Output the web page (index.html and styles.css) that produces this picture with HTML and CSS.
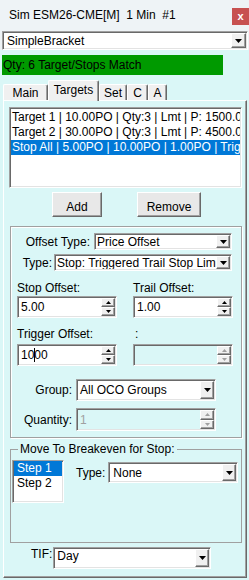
FILE: index.html
```html
<!DOCTYPE html>
<html>
<head>
<meta charset="utf-8">
<link rel="stylesheet" href="styles.css">
</head>
<body>
<div class="window">
  <div class="titlebar">
    <span class="title">Sim ESM26-CME[M]  1 Min  #1</span>
    <span class="close">x</span>
  </div>
  <div class="preset">
    <div class="combo combo-preset">
      <span class="val pad3">SimpleBracket</span>
      <span class="arrow"><svg width="7" height="4" viewBox="0 0 7 4"><path d="M0 0h7L3.5 4z"/></svg></span>
    </div>
  </div>
  <div class="main">
    <div class="status">Qty: 6 Target/Stops Match</div>
    <div class="tabs">
      <div class="tab w-main">Main</div>
      <div class="tab tab-active w-targets">Targets</div>
      <div class="tab w-set">Set</div>
      <div class="tab w-c">C</div>
      <div class="tab w-a">A</div>
    </div>
    <div class="page">
      <div class="listbox orders">
        <div class="item">Target 1 | 10.00PO | Qty:3 | Lmt | P: 1500.00</div>
        <div class="item">Target 2 | 30.00PO | Qty:3 | Lmt | P: 4500.00</div>
        <div class="item sel">Stop All | 5.00PO | 10.00PO | 1.00PO | TrigTrailStopLmt</div>
      </div>
      <div class="btnrow">
        <div class="btn btn-add">Add</div>
        <div class="btn btn-remove">Remove</div>
      </div>
      <div class="group1">
        <div class="row-r row-offset">
          <span class="lbl">Offset Type:</span>
          <div class="combo combo-offset">
            <span class="val pad1">Price Offset</span>
            <span class="arrow"><svg width="7" height="4" viewBox="0 0 7 4"><path d="M0 0h7L3.5 4z"/></svg></span>
          </div>
        </div>
        <div class="row-r row-type">
          <span class="lbl">Type:</span>
          <div class="combo combo-type">
            <span class="val pad1">Stop: Triggered Trail Stop Limit</span>
            <span class="arrow"><svg width="7" height="4" viewBox="0 0 7 4"><path d="M0 0h7L3.5 4z"/></svg></span>
          </div>
        </div>
        <div class="pair pair-1">
          <span class="lbl">Stop Offset:</span>
          <span class="lbl">Trail Offset:</span>
          <div class="spin">
            <span class="val">5.00</span>
            <span class="spinbtns"><span class="sb"><svg width="5" height="3" viewBox="0 0 5 3"><path d="M2.5 0L5 3H0z"/></svg></span><span class="sb"><svg width="5" height="3" viewBox="0 0 5 3"><path d="M0 0h5L2.5 3z"/></svg></span></span>
          </div>
          <div class="spin">
            <span class="val">1.00</span>
            <span class="spinbtns"><span class="sb"><svg width="5" height="3" viewBox="0 0 5 3"><path d="M2.5 0L5 3H0z"/></svg></span><span class="sb"><svg width="5" height="3" viewBox="0 0 5 3"><path d="M0 0h5L2.5 3z"/></svg></span></span>
          </div>
        </div>
        <div class="pair pair-2">
          <span class="lbl">Trigger Offset:</span>
          <span class="lbl colon">:</span>
          <div class="spin">
            <span class="val">10<span class="caret"></span>00</span>
            <span class="spinbtns"><span class="sb"><svg width="5" height="3" viewBox="0 0 5 3"><path d="M2.5 0L5 3H0z"/></svg></span><span class="sb"><svg width="5" height="3" viewBox="0 0 5 3"><path d="M0 0h5L2.5 3z"/></svg></span></span>
          </div>
          <div class="spin spin-disabled">
            <span class="val"></span>
            <span class="spinbtns"><span class="sb"><svg width="5" height="3" viewBox="0 0 5 3"><path d="M2.5 0L5 3H0z"/></svg></span><span class="sb"><svg width="5" height="3" viewBox="0 0 5 3"><path d="M0 0h5L2.5 3z"/></svg></span></span>
          </div>
        </div>
        <div class="lblgrid">
          <span class="lbl r">Group:</span>
          <div class="combo combo-group">
            <span class="val pad2">All OCO Groups</span>
            <span class="arrow"><svg width="7" height="4" viewBox="0 0 7 4"><path d="M0 0h7L3.5 4z"/></svg></span>
          </div>
          <span class="lbl r">Quantity:</span>
          <div class="spin spin-disabled spin-qty">
            <span class="val">1</span>
            <span class="spinbtns"><span class="sb"><svg width="5" height="3" viewBox="0 0 5 3"><path d="M2.5 0L5 3H0z"/></svg></span><span class="sb"><svg width="5" height="3" viewBox="0 0 5 3"><path d="M0 0h5L2.5 3z"/></svg></span></span>
          </div>
        </div>
      </div>
      <fieldset class="group2">
        <legend>Move To Breakeven for Stop:</legend>
        <div class="be">
          <div class="listbox steps">
            <div class="item sel">Step 1</div>
            <div class="item">Step 2</div>
          </div>
          <div class="be-type">
            <span class="lbl">Type:</span>
            <div class="combo combo-be">
              <span class="val pad3">None</span>
              <span class="arrow"><svg width="7" height="4" viewBox="0 0 7 4"><path d="M0 0h7L3.5 4z"/></svg></span>
            </div>
          </div>
        </div>
      </fieldset>
      <div class="tif">
        <span class="lbl">TIF:</span>
        <div class="combo combo-tif">
          <span class="val pad2 top">Day</span>
          <span class="arrow"><svg width="7" height="4" viewBox="0 0 7 4"><path d="M0 0h7L3.5 4z"/></svg></span>
        </div>
      </div>
    </div>
  </div>
</div>
</body>
</html>
```
FILE: styles.css
```css
* { box-sizing: border-box; }

body {
  margin: 0;
  font-family: "Liberation Sans", Arial, sans-serif;
  font-size: 12px;
  line-height: 14px;
  color: #000;
  background: #daf7f7;
  width: 249px;
  height: 580px;
  overflow: hidden;
}

.window {
  width: 249px;
  height: 580px;
  display: flex;
  flex-direction: column;
  background: #daf7f7;
}

.titlebar {
  height: 31px;
  background: #eef3f6;
  display: flex;
  align-items: flex-start;
}

.title {
  margin: 8px 0 0 9px;
  white-space: pre;
}

.close {
  margin: 8px 0 0 auto;
  width: 17px;
  height: 17px;
  background: #c75050;
  color: #fff;
  font-weight: bold;
  font-size: 11px;
  line-height: 16px;
  text-align: center;
}

.preset {
  background: #eef3f6;
  height: 19px;
  padding-left: 2px;
}

.combo {
  display: flex;
  background: #fff;
  border: 1px solid;
  border-color: #a0a0a0 #fff #fff #a0a0a0;
  box-shadow: inset 1px 1px 0 #696969, inset -1px -1px 0 #e3e3e3;
  padding: 1px;
}

.combo .val {
  flex: 1;
  min-width: 0;
  overflow: hidden;
  white-space: nowrap;
  display: flex;
  align-items: center;
}

.combo .val.top { align-items: flex-start; }

.pad1 { padding-left: 1px; }
.pad2 { padding-left: 2px; }
.pad3 { padding-left: 3px; }

.combo .arrow {
  width: 14px;
  flex: none;
  background: #f0f0f0;
  border: 1px solid;
  border-color: #fff #696969 #696969 #fff;
  box-shadow: inset -1px -1px 0 #a0a0a0;
  display: flex;
  align-items: center;
  justify-content: center;
}

.combo-preset { width: 246px; height: 19px; }
.combo-preset .arrow { width: 15px; }
.combo-offset { width: 138px; height: 17px; }
.combo-type { width: 178px; height: 17px; }
.combo-group { width: 140px; height: 22px; }
.combo-be { width: 130px; height: 21px; }
.combo-tif { width: 158px; height: 22px; }

.main {
  flex: 1;
  display: flex;
  flex-direction: column;
  padding-top: 5px;
}

.status {
  margin-left: 2px;
  width: 221px;
  height: 20px;
  background: #009a00;
  padding-left: 1px;
  line-height: 20px;
}

.tabs {
  height: 25px;
  display: flex;
  align-items: flex-end;
  padding-left: 3px;
}

.tab {
  height: 16px;
  padding-top: 1px;
  background: #f0f0f0;
  border: 1px solid;
  border-bottom: none;
  border-color: #fff #696969 #696969 #fff;
  box-shadow: inset -1px 0 0 #a0a0a0;
  border-radius: 2px 2px 0 0;
  text-align: center;
}

.tab-active {
  height: 21px;
  padding-top: 2px;
  margin-bottom: -1px;
  position: relative;
  z-index: 1;
}

.w-main { width: 45px; }
.w-targets { width: 51px; }
.w-set { width: 28px; }
.w-c { width: 21px; }
.w-a { width: 19px; }

.page {
  margin-left: 3px;
  width: 244px;
  height: 478px;
  border: 1px solid;
  border-color: #fff #696969 #696969 #fff;
  box-shadow: inset -1px -1px 0 #a0a0a0;
  background: #daf7f7;
  display: flex;
  flex-direction: column;
}

.listbox {
  background: #fff;
  border: 1px solid;
  border-color: #a0a0a0 #fff #fff #a0a0a0;
  box-shadow: inset 1px 1px 0 #696969, inset -1px -1px 0 #e3e3e3;
  overflow: hidden;
}

.listbox .item {
  height: 15px;
  line-height: 15px;
  white-space: nowrap;
  overflow: hidden;
}

.listbox .item.sel {
  background: #0078d7;
  color: #fff;
}

.orders {
  margin: 6px 0 0 5px;
  width: 233px;
  height: 81px;
  padding: 2px 1px 0;
}

.orders .item { padding-left: 1px; }

.btnrow {
  display: flex;
  gap: 35px;
  margin: 4px 0 0 48px;
}

.btn {
  height: 25px;
  background: #e8e8e8;
  border: 1px solid;
  border-color: #fff #696969 #696969 #fff;
  box-shadow: inset -1px -1px 0 #a0a0a0;
  text-align: center;
  padding-top: 7px;
}

.btn-add { width: 50px; }
.btn-remove { width: 64px; }

.group1 {
  margin: 9px 0 0 6px;
  width: 232px;
  height: 212px;
  border: 1px solid #a0a0a0;
  box-shadow: inset 1px 1px 0 #fff, 1px 1px 0 #fff;
  display: flex;
  flex-direction: column;
}

.row-r {
  display: flex;
  justify-content: flex-end;
  align-items: center;
  padding-right: 9px;
}

.row-offset { margin-top: 6px; gap: 4px; }
.row-type { margin-top: 4px; gap: 2px; }

.pair {
  display: grid;
  grid-template-columns: 100px 100px;
  column-gap: 16px;
  margin-left: 6px;
}

.pair-1 { margin-top: 10px; row-gap: 1px; }
.pair-2 { margin-top: 9px; row-gap: 3px; }

.colon { padding-left: 2px; }

.spin {
  height: 22px;
  display: flex;
  background: #fff;
  border: 1px solid;
  border-color: #a0a0a0 #fff #fff #a0a0a0;
  box-shadow: inset 1px 1px 0 #696969, inset -1px -1px 0 #e3e3e3;
  padding: 1px;
}

.spin .val {
  flex: 1;
  padding-left: 2px;
  display: flex;
  align-items: center;
  white-space: nowrap;
}

.caret {
  display: inline-block;
  width: 1px;
  height: 14px;
  background: #000;
  margin-right: -1px;
}

.spinbtns {
  width: 14px;
  display: flex;
  flex-direction: column;
  margin-right: 0;
}

.sb {
  flex: 1;
  background: #f0f0f0;
  border: 1px solid;
  border-color: #fff #696969 #696969 #fff;
  box-shadow: inset -1px -1px 0 #a0a0a0;
  display: flex;
  align-items: center;
  justify-content: center;
}

.spin-disabled {
  background: transparent;
  color: #a0a0a0;
}

.spin-disabled .sb svg { fill: #a0a0a0; }

.spin-qty { height: 23px; }
.spin-qty .val { padding-left: 2px; }

.lblgrid {
  display: grid;
  grid-template-columns: 61px 140px;
  column-gap: 4px;
  row-gap: 7px;
  align-items: center;
  margin-top: 13px;
}

.lbl.r { text-align: right; }

.group2 {
  margin: 5px 0 0 6px;
  padding: 0;
  width: 232px;
  height: 100px;
  min-width: 0;
  border: 1px solid #a0a0a0;
}

.group2 legend {
  margin-left: 7px;
  padding: 0 2px;
  line-height: 13px;
}

.be {
  display: flex;
  align-items: flex-start;
  margin-top: 4px;
  padding-left: 1px;
}

.steps {
  width: 52px;
  height: 43px;
  padding: 0 1px;
}

.steps .item { padding-left: 3px; }

.be-type {
  margin: 2px 0 0 12px;
  display: flex;
  align-items: center;
  gap: 3px;
}

.tif {
  display: flex;
  align-items: flex-start;
  gap: 1px;
  margin-top: 4px;
  padding-left: 27px;
}
```
